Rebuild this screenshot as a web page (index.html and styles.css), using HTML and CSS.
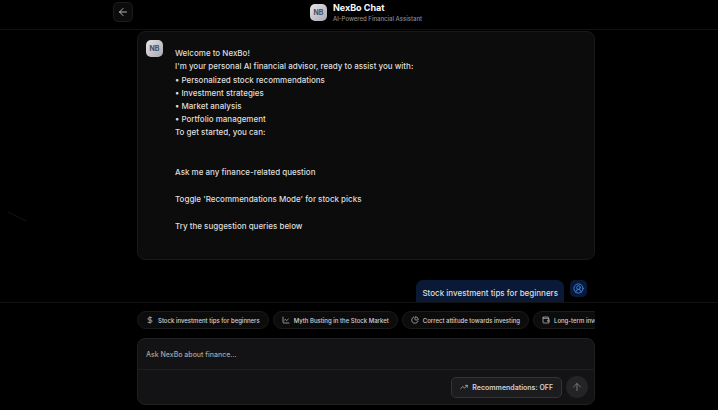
FILE: index.html
```html
<!DOCTYPE html>
<html lang="en">
<head>
<meta charset="utf-8">
<meta name="viewport" content="width=device-width, initial-scale=1">
<title>NexBo Chat</title>
<link rel="stylesheet" href="styles.css">
</head>
<body>
<svg class="streak" viewBox="0 0 20 12" aria-hidden="true"><path d="M1 1 L19 10"/></svg>
<header class="topbar">
  <div class="topbar-inner">
    <button class="back" type="button" aria-label="Back">
      <svg class="icon" viewBox="0 0 24 24"><path d="m12 19-7-7 7-7"/><path d="M19 12H5"/></svg>
    </button>
    <div class="brand">
      <span class="logo">NB</span>
      <div class="brand-text">
        <h1>NexBo Chat</h1>
        <p class="tagline">AI-Powered Financial Assistant</p>
      </div>
    </div>
  </div>
</header>
<main class="messages">
  <article class="bot">
    <span class="logo">NB</span>
    <div class="text">
      <p>Welcome to NexBo!</p>
      <p>I'm your personal AI financial advisor, ready to assist you with:</p>
      <ul>
        <li>• Personalized stock recommendations</li>
        <li>• Investment strategies</li>
        <li>• Market analysis</li>
        <li>• Portfolio management</li>
      </ul>
      <p>To get started, you can:</p>
      <div class="steps">
        <p>Ask me any finance-related question</p>
        <p>Toggle 'Recommendations Mode' for stock picks</p>
        <p>Try the suggestion queries below</p>
      </div>
    </div>
  </article>
  <article class="user">
    <p class="bubble">Stock investment tips for beginners</p>
    <span class="avatar">
      <svg class="icon" viewBox="0 0 24 24"><path d="M18 20a6 6 0 0 0-12 0"/><circle cx="12" cy="10" r="4"/><circle cx="12" cy="12" r="10"/></svg>
    </span>
  </article>
</main>
<footer class="dock">
  <div class="dock-inner">
    <div class="chips">
      <button class="chip" type="button"><svg class="icon" viewBox="0 0 24 24"><path d="M12 2v20"/><path d="M17 5H9.500a3.500 3.500 0 0 0 0 7h5a3.500 3.500 0 0 1 0 7H6"/></svg>Stock investment tips for beginners</button>
      <button class="chip" type="button"><svg class="icon" viewBox="0 0 24 24"><path d="M3 3v16a2 2 0 0 0 2 2h16"/><path d="m19 9-5 5-4-4-3 3"/></svg>Myth Busting in the Stock Market</button>
      <button class="chip" type="button"><svg class="icon" viewBox="0 0 24 24"><path d="M21 12c.552 0 1.005-.449.950-.998a10 10 0 0 0-8.953-8.951c-.550-.055-.998.398-.998.950v8a1 1 0 0 0 1 1z"/><path d="M21.210 15.890A10 10 0 1 1 8 2.830"/></svg>Correct attitude towards investing</button>
      <button class="chip" type="button"><svg class="icon" viewBox="0 0 24 24"><path d="M19 7V4a1 1 0 0 0-1-1H5a2 2 0 0 0 0 4h15a1 1 0 0 1 1 1v4h-3a2 2 0 0 0 0 4h3a1 1 0 0 0 1-1v-2a1 1 0 0 0-1-1"/><path d="M3 5v14a2 2 0 0 0 2 2h15a1 1 0 0 0 1-1v-4"/></svg>Long-term investment</button>
    </div>
    <form class="composer">
      <input type="text" aria-label="Message" placeholder="Ask NexBo about finance...">
      <div class="actions">
        <button class="toggle" type="button"><svg class="icon" viewBox="0 0 24 24"><path d="M22 7 13.500 15.500 8.500 10.500 2 17"/><path d="M16 7h6v6"/></svg>Recommendations: OFF</button>
        <button class="send" type="button" aria-label="Send"><svg class="icon" viewBox="0 0 24 24"><path d="m5 12 7-7 7 7"/><path d="M12 19V5"/></svg></button>
      </div>
    </form>
  </div>
</footer>
</body>
</html>
```
FILE: styles.css
```css
* { box-sizing: border-box; margin: 0; padding: 0; }

body {
  display: flex;
  flex-direction: column;
  height: 100vh;
  padding-left: 14px;
  overflow: hidden;
  background: #000;
  color: #dededf;
  font: 500 8px/13px Inter, "Liberation Sans", sans-serif;
}

button, input { font: inherit; color: inherit; border: 0; background: none; }
ul { list-style: none; }

.icon {
  flex: none;
  width: 8px;
  height: 8px;
  fill: none;
  stroke: currentColor;
  stroke-width: 2;
  stroke-linecap: round;
  stroke-linejoin: round;
}

.streak {
  position: absolute;
  left: 7px;
  top: 211px;
  width: 20px;
  height: 12px;
  fill: none;
  stroke: #151515;
}

.topbar {
  flex: none;
  height: 30px;
  margin-left: -14px;
  padding-left: 14px;
  border-bottom: 1px solid #111;
}

.topbar-inner {
  position: relative;
  display: flex;
  align-items: center;
  justify-content: center;
  max-width: 506px;
  height: 24px;
  margin: 0 auto;
}

.back {
  position: absolute;
  left: 0;
  top: 2px;
  display: grid;
  place-items: center;
  width: 20px;
  height: 20px;
  border: 1px solid #1c1c1e;
  border-radius: 5px;
  background: #0c0c0d;
  color: #b4b4b6;
}
.back .icon, .send .icon { width: 12px; height: 12px; }

.brand { display: flex; align-items: center; gap: 6px; }
.brand-text { padding-top: 2px; }

.logo {
  flex: none;
  display: grid;
  place-items: center;
  width: 17px;
  height: 17px;
  border-radius: 5px;
  background: linear-gradient(135deg, #e4e4e7, #a9a9b2);
  color: #4b4b52;
  font-size: 7px;
  font-weight: 700;
}

h1 { color: #fafafa; font-size: 9px; font-weight: 700; line-height: 12px; }
.tagline { color: #8b8b91; font-size: 6px; font-weight: 500; line-height: 10px; }

.messages {
  flex: 1;
  min-height: 0;
  width: 100%;
  max-width: 458px;
  margin: 0 auto;
  padding-top: 1px;
  overflow: hidden;
}

.bot {
  display: flex;
  gap: 12px;
  padding: 8px 8px 26px;
  border: 1px solid #19191a;
  border-radius: 8px;
  background: #0c0c0c;
}

.text { padding-top: 7px; }
.text ul { padding-top: 1px; }
.steps { display: grid; gap: 14px; padding-top: 27px; }

.user {
  display: flex;
  justify-content: flex-end;
  gap: 6px;
  padding: 20px 8px 0 0;
}

.bubble {
  padding: 7px 6px;
  border-radius: 7px;
  background: #0a1a36;
}

.avatar {
  display: grid;
  place-items: center;
  width: 17px;
  height: 17px;
  border-radius: 5px;
  background: #0a1a36;
  color: #4386e8;
}
.avatar .icon { width: 11px; height: 11px; }

.dock {
  flex: none;
  margin-left: -14px;
  padding: 8px 0 5px 14px;
  border-top: 1px solid #121212;
}
.dock-inner { max-width: 458px; margin: 0 auto; }

.chips { display: flex; gap: 4px; overflow: hidden; }

.chip {
  flex: none;
  display: flex;
  align-items: center;
  gap: 4px;
  height: 18px;
  padding: 0 8px;
  border: 1px solid #1b1b1c;
  border-radius: 9px;
  background: #0c0c0c;
  color: #d2d2d4;
  font-size: 6px;
}

.composer {
  margin-top: 9px;
  border: 1px solid #202022;
  border-radius: 8px;
  background: #131315;
}

.composer input {
  display: block;
  width: 100%;
  height: 30px;
  padding: 0 8px;
  outline: 0;
  font-size: 7px;
}
.composer input::placeholder { color: #a4a4a8; opacity: 1; }

.actions {
  display: flex;
  align-items: center;
  justify-content: flex-end;
  gap: 4px;
  padding: 6px;
  border-top: 1px solid #202022;
}

.toggle {
  display: flex;
  align-items: center;
  gap: 4px;
  height: 21px;
  padding: 0 8px;
  border: 1px solid #343437;
  border-radius: 5px;
  background: #1c1c1e;
  color: #cfcfd2;
  font-size: 7px;
  font-weight: 600;
}

.send {
  display: grid;
  place-items: center;
  width: 22px;
  height: 22px;
  border-radius: 50%;
  background: #242427;
  color: #77777c;
}
```
